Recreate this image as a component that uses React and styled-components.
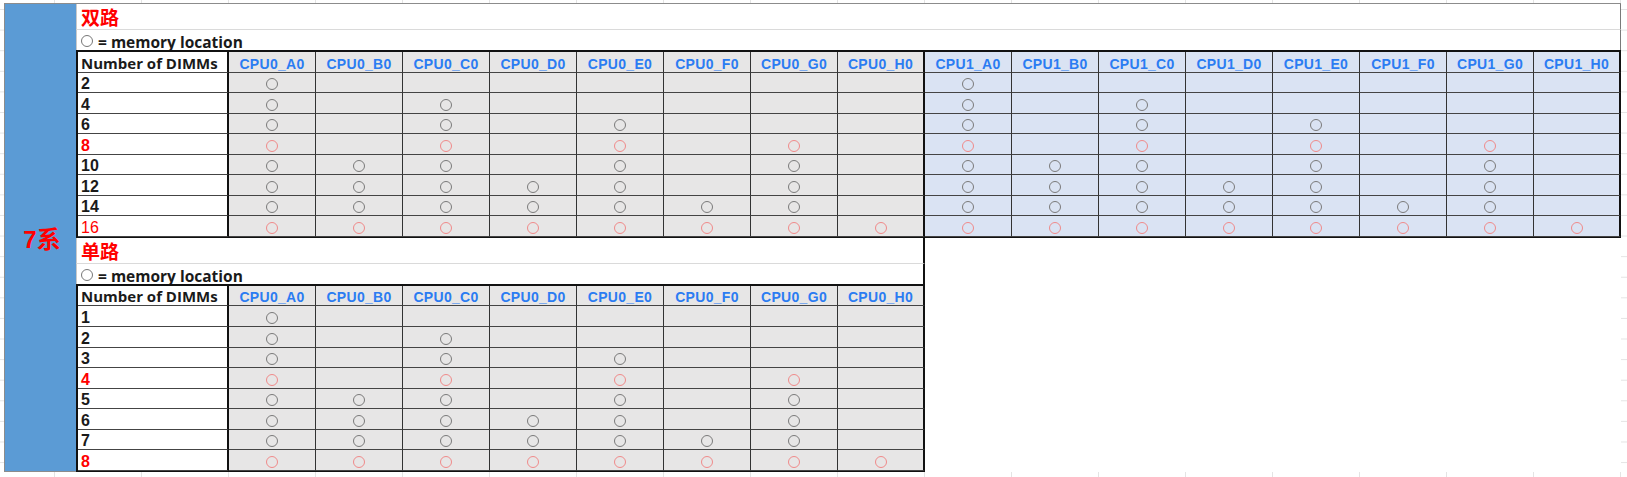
import React from "react";
import styled, { createGlobalStyle } from "styled-components";

const ROW = 20.55;
const COL = 87;
const FIRST = 151;
const LETTERS = ["A", "B", "C", "D", "E", "F", "G", "H"];

// which banks get a DIMM for n DIMMs per CPU
const FILL = {
  1: "A",
  2: "AC",
  3: "ACE",
  4: "ACEG",
  5: "ABCEG",
  6: "ABCDEG",
  7: "ABCDEFG",
  8: "ABCDEFGH",
};

const GlobalStyle = createGlobalStyle`
  html, body {
    margin: 0;
    padding: 0;
    background: #fff;
    overflow: hidden;
  }
  body {
    font-family: "Liberation Sans", "Noto Sans CJK SC", sans-serif;
  }
  * { box-sizing: border-box; }
`;

const Sheet = styled.div`
  width: 1627px;
  height: 477px;
  padding: 3px 0 0 4px;
  background-color: #fff;
  background-image:
    linear-gradient(to right, transparent 86px, #e4e4e4 86px),
    linear-gradient(to bottom, transparent 19.6px, #e4e4e4 19.6px);
  background-size: ${COL}px 100%, 100% 20.6px;
  background-position: 229px 0, 0 10px;
`;

const Frame = styled.div`
  display: flex;
  width: 1617px;
  border-top: 1px solid #8c8c8c;
  border-left: 1px solid #8c8c8c;
`;

const SeriesCell = styled.div`
  flex: none;
  width: 71px;
  display: flex;
  align-items: center;
  justify-content: center;
  padding-left: 3px;
  background: #5b9bd5;
  border-bottom: 1px solid #8c8c8c;
  color: #ff0000;
  font-weight: 700;
  font-size: 24px;
  font-family: "Liberation Sans", "Noto Sans CJK SC", sans-serif;
`;

const Sections = styled.div`
  display: flex;
  flex-direction: column;
  width: 1545px;
  background: #fff;
`;

const Section = styled.div`
  width: ${(p) => p.$width}px;
  display: flex;
  flex-direction: column;
`;

const TitleRow = styled.div`
  height: 26px;
  display: flex;
  align-items: flex-end;
  padding: 0 0 1px 4px;
  border-left: 1px solid #c9c9c9;
  border-right: ${(p) => (p.$closed ? "2px solid #111" : "1px solid #7a7a7a")};
  border-bottom: 1px solid #dadada;
  color: #ff0000;
  font-weight: 700;
  font-size: 19px;
  line-height: 22px;
  font-family: "Noto Sans CJK SC", "Liberation Sans", sans-serif;
`;

const LegendRow = styled.div`
  height: 20px;
  display: flex;
  align-items: flex-end;
  gap: 5px;
  padding-left: 4px;
  border-left: 1px solid #c9c9c9;
  border-right: ${(p) => (p.$closed ? "2px solid #111" : "1px solid #7a7a7a")};
  color: #1a1a1a;
  font-family: "Open Sans", "Liberation Sans", sans-serif;
  font-weight: 700;
  font-size: 15.5px;
  line-height: 16px;
`;

const LegendMark = styled.span`
  display: inline-block;
  width: 12px;
  height: 12px;
  margin-bottom: 3px;
  border: 1.5px solid #777;
  border-radius: 50%;
`;

const Grid = styled.div`
  display: grid;
  grid-template-columns: ${FIRST}px repeat(${(p) => p.$cols}, ${COL}px);
  grid-auto-rows: ${ROW}px;
  border-top: 2px solid #111;
  border-left: 2px solid #111;
  border-bottom: 1px solid #111;
`;

const Cell = styled.div`
  display: flex;
  align-items: flex-end;
  border-right: ${(p) => (p.$thick ? "2px solid #111" : "1px solid #333")};
  border-bottom: 1px solid #444;
  background: ${(p) => (p.$tone === "blue" ? "#dae3f3" : p.$tone === "gray" ? "#e7e6e6" : "#fff")};
`;

const LabelCell = styled(Cell)`
  padding-left: 3px;
  color: ${(p) => (p.$red ? "#ff0000" : "#1a1a1a")};
  font-weight: ${(p) => (p.$light ? 400 : 700)};
  font-size: 16px;
  line-height: 16px;
`;

const CornerCell = styled(Cell)`
  padding-left: 3px;
  color: #1a1a1a;
  font-family: "Open Sans", "Liberation Sans", sans-serif;
  font-weight: 700;
  font-size: 15px;
  line-height: 16px;
  padding-bottom: 1px;
`;

const HeadCell = styled(Cell)`
  justify-content: center;
  color: #2b7cf2;
  font-weight: 700;
  font-size: 14px;
  letter-spacing: 0.3px;
  line-height: 16px;
`;

const SlotCell = styled(Cell)`
  justify-content: center;
  padding-bottom: 2px;
`;

const Dot = styled.span`
  display: block;
  width: 12px;
  height: 12px;
  border: 1.6px solid ${(p) => (p.$red ? "#f08a8a" : "#7a7a7a")};
  border-radius: 50%;
`;

function MemoryTable({ title, cpus, rows, closed }) {
  const columns = [];
  cpus.forEach((cpu) => LETTERS.forEach((l) => columns.push({ cpu, bank: l })));
  const width = 2 + FIRST + columns.length * COL;

  const thickAt = (i) => i === columns.length - 1 || (i + 1) % 8 === 0;
  const toneOf = (cpu) => (cpu === 1 ? "blue" : "gray");

  return (
    <Section $width={width}>
      <TitleRow $closed={closed}>{title}</TitleRow>
      <LegendRow $closed={closed}>
        <LegendMark />
        <span>= memory location</span>
      </LegendRow>
      <Grid $cols={columns.length}>
        <CornerCell $thick>Number of DIMMs</CornerCell>
        {columns.map((c, i) => (
          <HeadCell key={`h${i}`} $thick={thickAt(i)} $tone={toneOf(c.cpu)}>
            CPU{c.cpu}_{c.bank}0
          </HeadCell>
        ))}
        {rows.map((r) => (
          <React.Fragment key={r.total}>
            <LabelCell $thick $red={r.red} $light={r.light}>
              {r.total}
            </LabelCell>
            {columns.map((c, i) => (
              <SlotCell key={`${r.total}-${i}`} $thick={thickAt(i)} $tone={toneOf(c.cpu)}>
                {FILL[r.perCpu].includes(c.bank) && <Dot $red={r.red} />}
              </SlotCell>
            ))}
          </React.Fragment>
        ))}
      </Grid>
    </Section>
  );
}

const dualRows = [2, 4, 6, 8, 10, 12, 14, 16].map((n) => ({
  total: n,
  perCpu: n / 2,
  red: n === 8 || n === 16,
  light: n === 16,
}));

const singleRows = [1, 2, 3, 4, 5, 6, 7, 8].map((n) => ({
  total: n,
  perCpu: n,
  red: n === 4 || n === 8,
}));

export default function App() {
  return (
    <>
      <GlobalStyle />
      <Sheet>
        <Frame>
          <SeriesCell>7系</SeriesCell>
          <Sections>
            <MemoryTable title="双路" cpus={[0, 1]} rows={dualRows} />
            <MemoryTable title="单路" cpus={[0]} rows={singleRows} closed />
          </Sections>
        </Frame>
      </Sheet>
    </>
  );
}
